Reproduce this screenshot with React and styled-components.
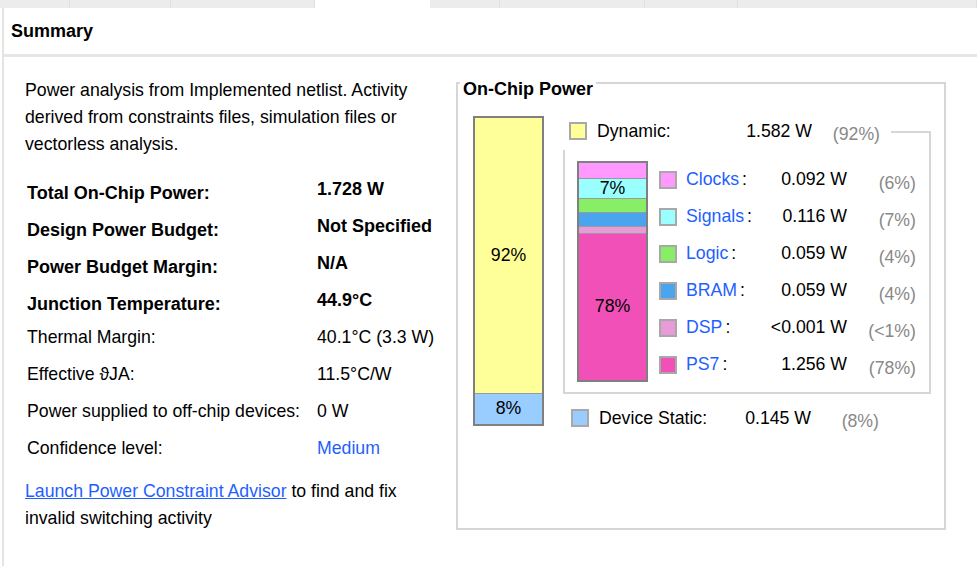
import React from 'react';
import styled, { createGlobalStyle } from 'styled-components';

const Global = createGlobalStyle`
  html, body { margin: 0; padding: 0; background: #fff; }
  body { font-family: "Liberation Sans", Arial, sans-serif; color: #000; }
`;

const BLUE = '#1f5fff';
const GREY_TEXT = '#888888';
const FRAME = '#d6d6d6';

const Page = styled.div`
  width: 977px;
  height: 566px;
  overflow: hidden;
  display: flex;
  flex-direction: column;
  background: #fff;
`;

const TabStrip = styled.div`
  display: flex;
  height: 8px;
  flex: none;
  background: #ececec;
`;

const Tab = styled.div`
  flex: ${p => (p.$w ? 'none' : '1')};
  width: ${p => (p.$w ? `${p.$w}px` : 'auto')};
  box-sizing: border-box;
  background: ${p => (p.$active ? '#fff' : 'transparent')};
  border-right: 1px solid ${p => (p.$active ? '#fff' : '#e0e0e0')};
`;

const Panel = styled.div`
  flex: 1;
  margin-left: 2px;
  border-left: 2px solid #e4e4e4;
  display: flex;
  flex-direction: column;
  min-height: 0;
`;

const Header = styled.div`
  height: 49px;
  box-sizing: border-box;
  border-bottom: 3px solid #e6e6e6;
  display: flex;
  align-items: center;
  padding-left: 7px;
  font-size: 18px;
  font-weight: bold;
`;

const Body = styled.div`
  display: flex;
  align-items: flex-start;
  padding: 10px 0 0 21px;
`;

const LeftCol = styled.div`
  width: 431px;
  flex: none;
  padding-top: 10px;
`;

const Para = styled.p`
  margin: ${p => p.$mt || 0}px 0 0;
  max-width: 420px;
  font-size: 17.7px;
  line-height: 27px;
`;

const InfoGrid = styled.div`
  display: grid;
  grid-template-columns: 290px auto;
  grid-auto-rows: 37px;
  margin: 13px 0 0 2px;
`;

const Cell = styled.div`
  display: flex;
  align-items: center;
  box-sizing: border-box;
  font-size: ${p => (p.$bold ? '18px' : '17.7px')};
  font-weight: ${p => (p.$bold ? 'bold' : 'normal')};
  padding-top: ${p => p.$pt || 0}px;
  color: ${p => (p.$link ? BLUE : '#000')};
  white-space: nowrap;
`;

const Link = styled.a`
  color: ${BLUE};
  text-decoration: underline;
  cursor: pointer;
`;

const Frame = styled.section`
  position: relative;
  margin-top: 15px;
  width: 490px;
  height: 448px;
  box-sizing: border-box;
  border: 2px solid ${FRAME};
  padding: 32px 0 0 15px;
  display: flex;
  align-items: flex-start;
`;

const FrameTitle = styled.h3`
  position: absolute;
  left: 2px;
  top: -5px;
  margin: 0;
  padding: 0 3px;
  background: #fff;
  font-size: 18px;
  line-height: 20px;
  font-weight: bold;
`;

const MainBar = styled.div`
  width: 71px;
  height: 310px;
  flex: none;
  box-sizing: border-box;
  border: 2px solid #808080;
  display: flex;
  flex-direction: column;
`;

const Segment = styled.div`
  flex: ${p => (p.$grow ? '1' : 'none')};
  height: ${p => (p.$h ? `${p.$h}px` : 'auto')};
  box-sizing: border-box;
  background: ${p => p.$color};
  border-top: ${p => (p.$first ? 'none' : '1px solid #9a9a9a')};
  display: flex;
  align-items: center;
  justify-content: center;
  font-size: 17.7px;
  line-height: 1;
  overflow: visible;
  white-space: nowrap;
`;

const RightCol = styled.div`
  width: 368px;
  margin-left: 19px;
  display: flex;
  flex-direction: column;
`;

const SumRow = styled.div`
  display: grid;
  grid-template-columns: 18px 1fr auto 68px;
  align-items: center;
  height: 30px;
  width: ${p => p.$w}px;
  padding-left: ${p => p.$indent}px;
  box-sizing: border-box;
  margin-top: ${p => p.$mt || 0}px;
  font-size: 17.7px;
`;

const Swatch = styled.span`
  width: 18px;
  height: 18px;
  box-sizing: border-box;
  border: 2px solid #a8a8a8;
  background: ${p => p.$color};
`;

const SumName = styled.span`
  margin-left: 10px;
  white-space: nowrap;
`;

const Value = styled.span`
  text-align: right;
  white-space: nowrap;
`;

const Pct = styled.span`
  text-align: right;
  color: ${GREY_TEXT};
  white-space: nowrap;
  padding-top: ${p => p.$drop * 2}px;
`;

const DetailBox = styled.div`
  position: relative;
  margin-top: 4px;
  border: 2px solid ${FRAME};
  border-top: none;
  padding: 11px 0 9px 12px;
  display: flex;
  align-items: flex-start;

  &::before {
    content: '';
    position: absolute;
    right: -2px;
    top: -19px;
    width: 40px;
    height: 19px;
    box-sizing: border-box;
    border-top: 2px solid ${FRAME};
    border-right: 2px solid ${FRAME};
  }
`;

const StackBar = styled.div`
  width: 71px;
  flex: none;
  box-sizing: border-box;
  border: 2px solid #808080;
  display: flex;
  flex-direction: column;
`;

const LegendList = styled.div`
  width: 257px;
  margin-left: 11px;
  display: flex;
  flex-direction: column;
`;

const LegendRow = styled.div`
  display: grid;
  grid-template-columns: 18px 1fr auto 69px;
  align-items: center;
  height: 37px;
  font-size: 17.7px;
`;

const LegendName = styled.span`
  margin-left: 9px;
  white-space: nowrap;
  color: ${BLUE};

  & > b {
    font-weight: normal;
    color: #000;
    margin-left: 3px;
  }
`;

const info = [
  { label: 'Total On-Chip Power:', value: '1.728 W', bold: true },
  { label: 'Design Power Budget:', value: 'Not Specified', bold: true },
  { label: 'Power Budget Margin:', value: 'N/A', bold: true },
  { label: 'Junction Temperature:', value: '44.9°C', bold: true },
  { label: 'Thermal Margin:', value: '40.1°C (3.3 W)' },
  { label: 'Effective \u03D1JA:', value: '11.5°C/W' },
  { label: 'Power supplied to off-chip devices:', value: '0 W' },
  { label: 'Confidence level:', value: 'Medium', link: true },
];

const parts = [
  { name: 'Clocks', value: '0.092 W', pct: '(6%)', color: '#ff99ff', h: 15 },
  { name: 'Signals', value: '0.116 W', pct: '(7%)', color: '#99ffff', h: 20, label: '7%' },
  { name: 'Logic', value: '0.059 W', pct: '(4%)', color: '#88ee66', h: 14 },
  { name: 'BRAM', value: '0.059 W', pct: '(4%)', color: '#4aa4ee', h: 14 },
  { name: 'DSP', value: '<0.001 W', pct: '(<1%)', color: '#e89bd8', h: 7 },
  { name: 'PS7', value: '1.256 W', pct: '(78%)', color: '#f050b8', h: 147, label: '78%' },
];

const tabs = [70, 101, 144, 115, 70, 145, 93, 0];

export default function App() {
  return (
    <>
      <Global />
      <Page>
        <TabStrip>
          {tabs.map((w, i) => (
            <Tab key={i} $w={w} $active={i === 3} />
          ))}
        </TabStrip>
        <Panel>
          <Header>Summary</Header>
          <Body>
            <LeftCol>
              <Para>
                Power analysis from Implemented netlist. Activity derived from constraints files,
                simulation files or vectorless analysis.
              </Para>
              <InfoGrid>
                {info.map(r => (
                  <React.Fragment key={r.label}>
                    <Cell $bold={r.bold} $pt={r.bold ? 8 : 0}>{r.label}</Cell>
                    <Cell $bold={r.bold} $link={r.link}>{r.value}</Cell>
                  </React.Fragment>
                ))}
              </InfoGrid>
              <Para $mt={11}>
                <Link>Launch Power Constraint Advisor</Link> to find and fix invalid switching
                activity
              </Para>
            </LeftCol>
            <Frame>
              <FrameTitle>On-Chip Power</FrameTitle>
              <MainBar>
                <Segment $first $grow $color="#ffff99">92%</Segment>
                <Segment $h={31} $color="#99ccff">8%</Segment>
              </MainBar>
              <RightCol>
                <SumRow $indent={6} $w={317}>
                  <Swatch $color="#ffff99" />
                  <SumName>Dynamic:</SumName>
                  <Value>1.582 W</Value>
                  <Pct $drop={3}>(92%)</Pct>
                </SumRow>
                <DetailBox>
                  <StackBar>
                    {parts.map((p, i) => (
                      <Segment key={p.name} $first={i === 0} $h={p.h} $color={p.color}>
                        {p.label || ''}
                      </Segment>
                    ))}
                  </StackBar>
                  <LegendList>
                    {parts.map(p => (
                      <LegendRow key={p.name}>
                        <Swatch $color={p.color} />
                        <LegendName>
                          {p.name}
                          <b>:</b>
                        </LegendName>
                        <Value>{p.value}</Value>
                        <Pct $drop={3.5}>{p.pct}</Pct>
                      </LegendRow>
                    ))}
                  </LegendList>
                </DetailBox>
                <SumRow $indent={8} $w={316} $mt={9}>
                  <Swatch $color="#99ccff" />
                  <SumName>Device Static:</SumName>
                  <Value>0.145 W</Value>
                  <Pct $drop={3}>(8%)</Pct>
                </SumRow>
              </RightCol>
            </Frame>
          </Body>
        </Panel>
      </Page>
    </>
  );
}
